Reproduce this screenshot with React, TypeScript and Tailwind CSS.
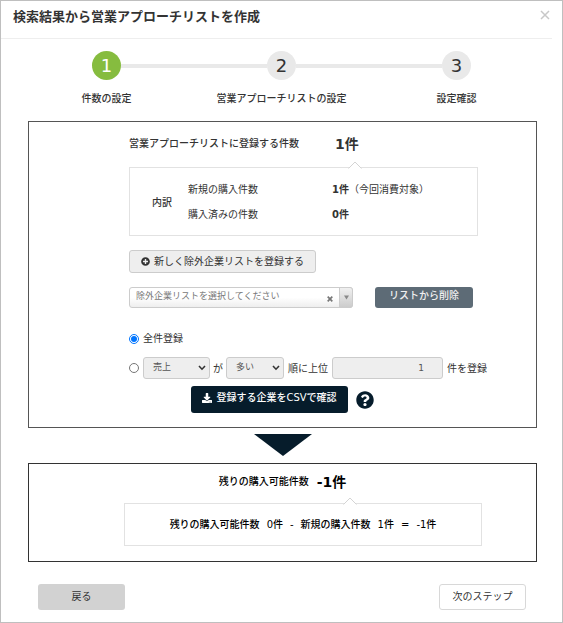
import { useState } from 'react';
import { FaDownload, FaPlusCircle, FaQuestionCircle } from 'react-icons/fa';

interface StepProps {
  number: number;
  label: string;
  active?: boolean;
  first?: boolean;
  last?: boolean;
}

const steps = ['件数の設定', '営業アプローチリストの設定', '設定確認'];

function Step({ number, label, active, first, last }: StepProps) {
  return (
    <li className="flex flex-col items-center">
      <div className="flex w-full items-center">
        <span className={`h-1 flex-1 ${first ? '' : 'bg-[#e9e9e9]'}`} />
        <span
          className={`flex size-[29px] items-center justify-center rounded-full text-[18px] leading-none ${
            active ? 'bg-[#86bc3f] text-white' : 'bg-[#e9e9e9] text-[#333333]'
          }`}
        >
          {number}
        </span>
        <span className={`h-1 flex-1 ${last ? '' : 'bg-[#e9e9e9]'}`} />
      </div>
      <span className="mt-[9px] text-[10px] leading-5 font-medium whitespace-nowrap">{label}</span>
    </li>
  );
}

function Notch() {
  return (
    <svg className="absolute -top-[7px] left-[218px]" width="14" height="8" viewBox="0 0 14 8" aria-hidden="true">
      <path d="M0.5 7.5 L7 1 L13.5 7.5" fill="#ffffff" stroke="#d4d4d4" />
      <path d="M1.5 7.5 H12.5" stroke="#ffffff" />
    </svg>
  );
}

function Chevron() {
  return (
    <svg
      className="pointer-events-none absolute top-2 right-1"
      width="8"
      height="6"
      viewBox="0 0 8 6"
      fill="none"
      aria-hidden="true"
    >
      <path d="M1 1 L4 4.2 L7 1" stroke="#333333" strokeWidth="1.6" />
    </svg>
  );
}

export default function App() {
  const [mode, setMode] = useState('all');

  return (
    <div className="min-h-screen border border-[#bfbfbf] bg-white font-['DejaVu_Sans','Noto_Sans_CJK_JP',sans-serif] text-[10px] text-[#333333]">
      {/* Header */}
      <header className="mr-2.5 flex h-[38px] items-start justify-between border-b border-[#eeeeee] pt-1.5 pl-3">
        <h1 className="text-[13px] leading-5 font-bold">検索結果から営業アプローチリストを作成</h1>
        <button type="button" aria-label="閉じる" className="mt-[3px] mr-0.5">
          <svg width="10" height="10" viewBox="0 0 10 10" aria-hidden="true">
            <path d="M1 1 L9 9 M9 1 L1 9" stroke="#c8c8c8" strokeWidth="1.5" />
          </svg>
        </button>
      </header>

      {/* Steps */}
      <ol className="mt-3 grid grid-cols-3 px-[18px]">
        {steps.map((label, i) => (
          <Step
            key={label}
            number={i + 1}
            label={label}
            active={i === 0}
            first={i === 0}
            last={i === steps.length - 1}
          />
        ))}
      </ol>

      <main className="mt-3 mr-[25px] ml-[27px]">
        {/* Registration settings */}
        <section className="border border-[#555555] pt-3 pb-[14px] pl-[100px]">
          <div className="flex items-center leading-5">
            <h2 className="w-[206px] font-medium">営業アプローチリストに登録する件数</h2>
            <strong className="text-[14px] font-bold">1件</strong>
          </div>

          <div className="relative mt-[13px] flex max-w-[349px] items-center border border-[#e2e2e2] pt-[9px] pb-2 pl-[22px] leading-[25px]">
            <Notch />
            <span className="w-9 font-medium">内訳</span>
            <dl className="grid grid-cols-[144px_auto]">
              <dt>新規の購入件数</dt>
              <dd>
                <b className="font-bold">1件</b>（今回消費対象）
              </dd>
              <dt>購入済みの件数</dt>
              <dd>
                <b className="font-bold">0件</b>
              </dd>
            </dl>
          </div>

          <button
            type="button"
            className="mt-[14px] flex h-[23px] items-center gap-1 rounded-[3px] border border-[#cccccc] bg-[#eeeeee] px-[11px]"
          >
            <FaPlusCircle size={9} />
            新しく除外企業リストを登録する
          </button>

          <div className="mt-[14px] flex gap-[22px]">
            <div className="relative w-56">
              <select
                aria-label="除外企業リスト"
                className="h-[21px] w-full appearance-none rounded-[3px] border border-[#cccccc] bg-linear-to-b from-white from-50% to-[#eeeeee] pr-8 pb-0.5 pl-1.5 text-[9px] text-[#777777]"
              >
                <option>除外企業リストを選択してください</option>
              </select>
              <button type="button" aria-label="選択を解除" className="absolute top-[9px] right-5">
                <svg width="6" height="6" viewBox="0 0 6 6" aria-hidden="true">
                  <path d="M0.7 0.7 L5.3 5.3 M5.3 0.7 L0.7 5.3" stroke="#777777" strokeWidth="1.7" />
                </svg>
              </button>
              <span className="pointer-events-none absolute inset-y-0 right-0 flex w-[14px] items-center justify-center rounded-r-[3px] border border-[#cccccc] bg-linear-to-b from-[#f0f0f0] to-[#cccccc]">
                <svg width="5" height="5" viewBox="0 0 5 5" aria-hidden="true">
                  <path d="M0 0.5 H5 L2.5 4.5 Z" fill="#888888" />
                </svg>
              </span>
            </div>
            <button
              type="button"
              className="h-[21px] w-[98px] rounded-[3px] bg-[#5d6b76] pb-1 leading-4 font-medium text-[#f0f0f0]"
            >
              リストから削除
            </button>
          </div>

          <label className="mt-5 flex h-[21px] items-center gap-1">
            <input
              type="radio"
              name="mode"
              className="size-[10px]"
              checked={mode === 'all'}
              onChange={() => setMode('all')}
            />
            全件登録
          </label>

          <div className="mt-2 flex h-[22px] items-center">
            <input
              type="radio"
              name="mode"
              aria-label="上位を登録"
              className="mr-1 size-[10px]"
              checked={mode === 'top'}
              onChange={() => setMode('top')}
            />
            <span className="relative w-[67px]">
              <select
                aria-label="項目"
                className="h-[22px] w-full appearance-none rounded-[3px] border border-[#cccccc] bg-[#eeeeee] pl-[9px] text-[9px] text-[#555555]"
              >
                <option>売上</option>
              </select>
              <Chevron />
            </span>
            <span className="mx-[3px]">が</span>
            <span className="relative w-[58px]">
              <select
                aria-label="順序"
                className="h-[22px] w-full appearance-none rounded-[3px] border border-[#cccccc] bg-[#eeeeee] pl-[9px] text-[9px] text-[#555555]"
              >
                <option>多い</option>
              </select>
              <Chevron />
            </span>
            <label htmlFor="count" className="mx-1 whitespace-nowrap">
              順に上位
            </label>
            <input
              id="count"
              type="text"
              defaultValue="1"
              className="h-[22px] w-[111px] rounded-[3px] border border-[#cccccc] bg-[#eeeeee] pr-[18px] text-right text-[9px] text-[#555555]"
            />
            <span className="ml-1 whitespace-nowrap">件を登録</span>
          </div>

          <div className="mt-[7px] ml-[62px] flex items-center gap-2">
            <button
              type="button"
              className="flex h-[27px] w-[157px] items-center justify-center gap-1 rounded-[3px] bg-[#061c2b] pb-1 font-medium text-white"
            >
              <FaDownload size={10} />
              登録する企業をCSVで確認
            </button>
            <button type="button" aria-label="ヘルプ" className="text-[#061c2b]">
              <FaQuestionCircle size={18} />
            </button>
          </div>
        </section>

        <svg className="mx-auto mt-1.5 block" width="58" height="22" viewBox="0 0 58 22" aria-hidden="true">
          <path d="M0 0 H58 L29 22 Z" fill="#061c2b" />
        </svg>

        {/* Remaining count */}
        <section className="mt-[7px] border border-[#333333] pt-[7px] pb-[15px] text-black">
          <div className="flex items-center justify-center gap-2 leading-[22px]">
            <h2 className="font-medium">残りの購入可能件数</h2>
            <strong className="text-[14px] font-bold">-1件</strong>
          </div>
          <div className="relative mt-[10px] mr-[54px] ml-[95px] flex h-[43px] items-center justify-center gap-[7px] border border-[#e2e2e2] font-medium whitespace-nowrap">
            <Notch />
            <span>残りの購入可能件数</span>
            <span>0件</span>
            <span>-</span>
            <span>新規の購入件数</span>
            <span>1件</span>
            <span>=</span>
            <span>-1件</span>
          </div>
        </section>
      </main>

      {/* Footer buttons */}
      <footer className="mt-[22px] flex justify-between pr-9 pl-[37px]">
        <button type="button" className="h-[26px] w-[87px] rounded-[3px] bg-[#d2d2d2] pb-0.5">
          戻る
        </button>
        <button type="button" className="h-[26px] w-[87px] rounded-[3px] border border-[#d8d8d8] bg-white pb-0.5">
          次のステップ
        </button>
      </footer>
    </div>
  );
}
